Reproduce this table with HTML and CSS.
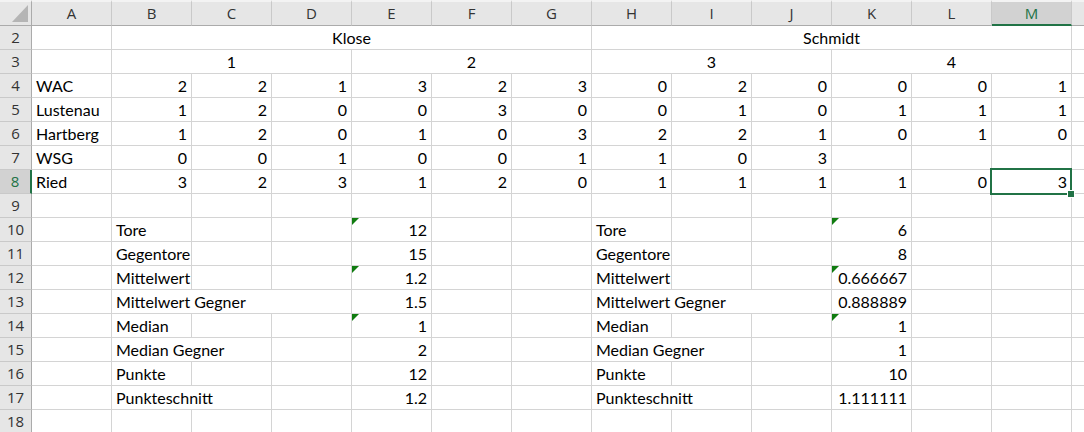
FILE: index.html
```html
<!DOCTYPE html>
<html>
<head>
<meta charset="utf-8">
<link rel="stylesheet" href="styles.css">
</head>
<body>
<div class="sheet">
  <!-- header row -->
  <div class="corner"><span class="tri"></span></div>
  <div class="ch">A</div><div class="ch">B</div><div class="ch">C</div><div class="ch">D</div><div class="ch">E</div><div class="ch">F</div><div class="ch">G</div><div class="ch">H</div><div class="ch">I</div><div class="ch">J</div><div class="ch">K</div><div class="ch">L</div><div class="ch ch-sel">M</div><div class="ch ch-end"></div>

  <!-- row 2 -->
  <div class="rh">2</div><div class="c"></div>
  <div class="c ctr s6">Klose</div><div class="c ctr s6">Schmidt</div><div class="c"></div>

  <!-- row 3 -->
  <div class="rh">3</div><div class="c"></div>
  <div class="c ctr s3">1</div><div class="c ctr s3">2</div><div class="c ctr s3">3</div><div class="c ctr s3">4</div><div class="c"></div>

  <!-- row 4 -->
  <div class="rh">4</div><div class="c">WAC</div>
  <div class="c n">2</div><div class="c n">2</div><div class="c n">1</div><div class="c n">3</div><div class="c n">2</div><div class="c n">3</div><div class="c n">0</div><div class="c n">2</div><div class="c n">0</div><div class="c n">0</div><div class="c n">0</div><div class="c n">1</div><div class="c"></div>

  <!-- row 5 -->
  <div class="rh">5</div><div class="c">Lustenau</div>
  <div class="c n">1</div><div class="c n">2</div><div class="c n">0</div><div class="c n">0</div><div class="c n">3</div><div class="c n">0</div><div class="c n">0</div><div class="c n">1</div><div class="c n">0</div><div class="c n">1</div><div class="c n">1</div><div class="c n">1</div><div class="c"></div>

  <!-- row 6 -->
  <div class="rh">6</div><div class="c">Hartberg</div>
  <div class="c n">1</div><div class="c n">2</div><div class="c n">0</div><div class="c n">1</div><div class="c n">0</div><div class="c n">3</div><div class="c n">2</div><div class="c n">2</div><div class="c n">1</div><div class="c n">0</div><div class="c n">1</div><div class="c n">0</div><div class="c"></div>

  <!-- row 7 -->
  <div class="rh">7</div><div class="c">WSG</div>
  <div class="c n">0</div><div class="c n">0</div><div class="c n">1</div><div class="c n">0</div><div class="c n">0</div><div class="c n">1</div><div class="c n">1</div><div class="c n">0</div><div class="c n">3</div><div class="c"></div><div class="c"></div><div class="c"></div><div class="c"></div>

  <!-- row 8 -->
  <div class="rh rh-sel">8</div><div class="c">Ried</div>
  <div class="c n">3</div><div class="c n">2</div><div class="c n">3</div><div class="c n">1</div><div class="c n">2</div><div class="c n">0</div><div class="c n">1</div><div class="c n">1</div><div class="c n">1</div><div class="c n">1</div><div class="c n">0</div><div class="c n active">3<span class="sel"><span class="handle"></span></span></div><div class="c"></div>

  <!-- row 9 -->
  <div class="rh">9</div>
  <div class="c"></div><div class="c"></div><div class="c"></div><div class="c"></div><div class="c"></div><div class="c"></div><div class="c"></div><div class="c"></div><div class="c"></div><div class="c"></div><div class="c"></div><div class="c"></div><div class="c"></div><div class="c"></div>

  <!-- row 10 -->
  <div class="rh">10</div><div class="c"></div>
  <div class="c">Tore</div><div class="c"></div><div class="c"></div><div class="c n flag">12</div><div class="c"></div><div class="c"></div>
  <div class="c">Tore</div><div class="c"></div><div class="c"></div><div class="c n flag">6</div><div class="c"></div><div class="c"></div><div class="c"></div>

  <!-- row 11 -->
  <div class="rh">11</div><div class="c"></div>
  <div class="c">Gegentore</div><div class="c"></div><div class="c"></div><div class="c n">15</div><div class="c"></div><div class="c"></div>
  <div class="c">Gegentore</div><div class="c"></div><div class="c"></div><div class="c n">8</div><div class="c"></div><div class="c"></div><div class="c"></div>

  <!-- row 12 -->
  <div class="rh">12</div><div class="c"></div>
  <div class="c">Mittelwert</div><div class="c"></div><div class="c"></div><div class="c n flag">1.2</div><div class="c"></div><div class="c"></div>
  <div class="c">Mittelwert</div><div class="c"></div><div class="c"></div><div class="c n flag">0.666667</div><div class="c"></div><div class="c"></div><div class="c"></div>

  <!-- row 13 -->
  <div class="rh">13</div><div class="c"></div>
  <div class="c s3">Mittelwert Gegner</div><div class="c n">1.5</div><div class="c"></div><div class="c"></div>
  <div class="c s3">Mittelwert Gegner</div><div class="c n">0.888889</div><div class="c"></div><div class="c"></div><div class="c"></div>

  <!-- row 14 -->
  <div class="rh">14</div><div class="c"></div>
  <div class="c">Median</div><div class="c"></div><div class="c"></div><div class="c n flag">1</div><div class="c"></div><div class="c"></div>
  <div class="c">Median</div><div class="c"></div><div class="c"></div><div class="c n flag">1</div><div class="c"></div><div class="c"></div><div class="c"></div>

  <!-- row 15 -->
  <div class="rh">15</div><div class="c"></div>
  <div class="c s2">Median Gegner</div><div class="c"></div><div class="c n">2</div><div class="c"></div><div class="c"></div>
  <div class="c s2">Median Gegner</div><div class="c"></div><div class="c n">1</div><div class="c"></div><div class="c"></div><div class="c"></div>

  <!-- row 16 -->
  <div class="rh">16</div><div class="c"></div>
  <div class="c">Punkte</div><div class="c"></div><div class="c"></div><div class="c n">12</div><div class="c"></div><div class="c"></div>
  <div class="c">Punkte</div><div class="c"></div><div class="c"></div><div class="c n">10</div><div class="c"></div><div class="c"></div><div class="c"></div>

  <!-- row 17 -->
  <div class="rh">17</div><div class="c"></div>
  <div class="c s2">Punkteschnitt</div><div class="c"></div><div class="c n">1.2</div><div class="c"></div><div class="c"></div>
  <div class="c s2">Punkteschnitt</div><div class="c"></div><div class="c n">1.111111</div><div class="c"></div><div class="c"></div><div class="c"></div>

  <!-- row 18 -->
  <div class="rh">18</div>
  <div class="c"></div><div class="c"></div><div class="c"></div><div class="c"></div><div class="c"></div><div class="c"></div><div class="c"></div><div class="c"></div><div class="c"></div><div class="c"></div><div class="c"></div><div class="c"></div><div class="c"></div><div class="c"></div>
</div>
</body>
</html>
```

FILE: styles.css
```css
* { box-sizing: border-box; }
html, body { margin: 0; padding: 0; background: #fff; overflow: hidden; }

.sheet {
  display: grid;
  grid-template-columns: 32px repeat(13, 80px) 40px;
  grid-template-rows: 26px repeat(17, 24px);
  width: 1084px;
  height: 432px;
  overflow: hidden;
  font-family: "Lato", "Open Sans", sans-serif;
  font-size: 16px;
  color: #000;
}

.corner {
  background: #e6e6e6;
  border-top: 2px solid #f3f3f3;
  border-right: 1px solid #ababab;
  border-bottom: 1px solid #ababab;
  position: relative;
}
.corner .tri {
  position: absolute;
  left: 12px;
  top: 3px;
  width: 0;
  height: 0;
  border-left: 16px solid transparent;
  border-bottom: 17px solid #b5b5b5;
}

.ch {
  background: #e6e6e6;
  border-top: 2px solid #f3f3f3;
  border-right: 1px solid #c9c9c9;
  border-bottom: 1px solid #ababab;
  font-family: "Open Sans", sans-serif;
  font-size: 15px;
  line-height: 23px;
  text-align: center;
  color: #333;
}
.ch-sel {
  background: #d2d2d2;
  color: #217346;
  border-bottom: 2px solid #217346;
  line-height: 22px;
}
.ch-end { border-right: none; }

.rh {
  background: #e6e6e6;
  border-right: 1px solid #ababab;
  border-bottom: 1px solid #c9c9c9;
  font-family: "Open Sans", sans-serif;
  font-size: 15px;
  line-height: 23px;
  text-align: center;
  color: #333;
}
.rh-sel {
  background: #d2d2d2;
  color: #217346;
  border-right: 2px solid #217346;
}

.c {
  border-right: 1px solid #d4d4d4;
  border-bottom: 1px solid #d4d4d4;
  line-height: 23px;
  padding: 0 4px 0 4px;
  white-space: nowrap;
  overflow: hidden;
  position: relative;
}
.n { text-align: right; padding-right: 4px; }
.ctr { text-align: center; }
.s2 { grid-column: span 2; }
.s3 { grid-column: span 3; }
.s6 { grid-column: span 6; }

.flag::before {
  content: "";
  position: absolute;
  left: 0;
  top: 0;
  width: 0;
  height: 0;
  border-top: 7px solid #107c10;
  border-right: 7px solid transparent;
}

.active { overflow: visible; z-index: 2; }
.sel {
  position: absolute;
  left: -2px;
  top: -2px;
  right: -1px;
  bottom: -2px;
  border: 2px solid #217346;
  pointer-events: none;
}
.handle {
  position: absolute;
  right: -5px;
  bottom: -5px;
  width: 8px;
  height: 8px;
  background: #217346;
  border: 1px solid #fff;
}
```
